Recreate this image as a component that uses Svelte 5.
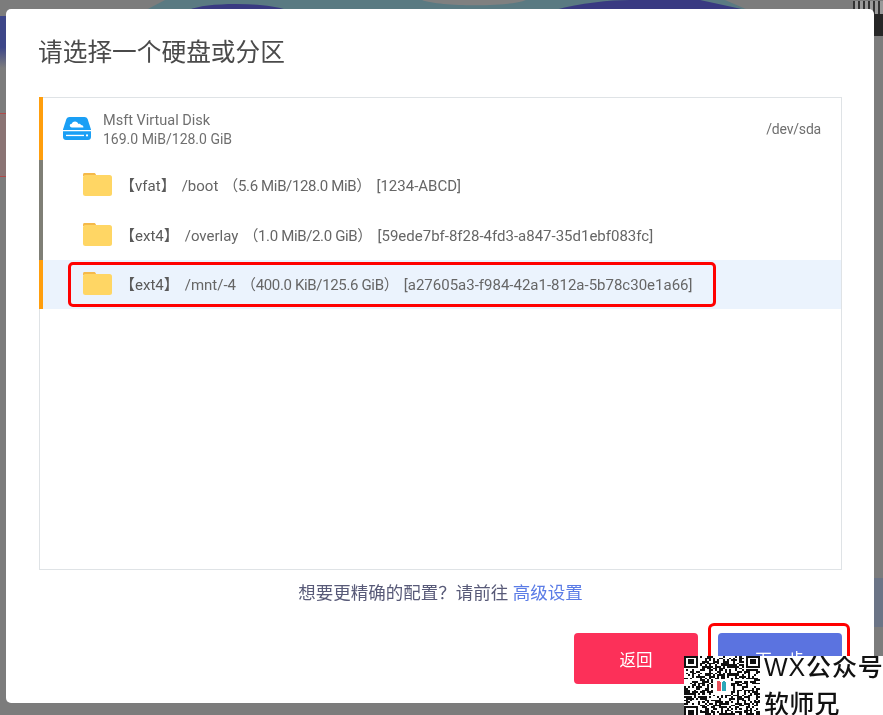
<script lang="ts">
  interface Partition {
    fs: string;
    mount: string;
    usage: string;
    uuid: string;
    selected?: boolean;
  }

  const partitions: Partition[] = [
    { fs: 'vfat', mount: '/boot', usage: '5.6 MiB/128.0 MiB', uuid: '1234-ABCD' },
    { fs: 'ext4', mount: '/overlay', usage: '1.0 MiB/2.0 GiB', uuid: '59ede7bf-8f28-4fd3-a847-35d1ebf083fc' },
    { fs: 'ext4', mount: '/mnt/-4', usage: '400.0 KiB/125.6 GiB', uuid: 'a27605a3-f984-42a1-812a-5b78c30e1a66', selected: true }
  ];

  // rough QR pattern, only has to look like the one in the watermark
  const size = 37;
  function inFinder(x: number, y: number) {
    return (x < 8 && y < 8) || (x > size - 9 && y < 8) || (x < 8 && y > size - 9);
  }
  function inLogo(x: number, y: number) {
    return x > 13 && x < 23 && y > 13 && y < 23;
  }
  const modules: { x: number; y: number }[] = [];
  let seed = 7;
  for (let y = 0; y < size; y++) {
    for (let x = 0; x < size; x++) {
      seed = (seed * 1103515245 + 12345) & 0x7fffffff;
      if (!inFinder(x, y) && !inLogo(x, y) && (seed >> 16) % 100 < 50) modules.push({ x, y });
    }
  }
  const finders = [[0, 0], [size - 7, 0], [0, size - 7]];
</script>

<div class="page">
  <svg class="backdrop" viewBox="0 0 883 10" aria-hidden="true">
    <path d="M146 10 L165 0 H725 L748 10 Z" fill="#5a7a82" />
    <path d="M422 0 C440 7 510 7 526 0 Z" fill="#808080" />
    <path d="M189 10 C205 2 265 2 287 10 Z" fill="#393a82" />
    <path d="M555 10 C580 3 610 0 630 0 H700 L746 10 Z" fill="#393a82" />
  </svg>
  <div class="hazard"></div>
  <div class="hazard-stripes"></div>
  <div class="left-tab"></div>
  <div class="left-mark"></div>
  <div class="right-tint"></div>

  <section class="dialog">
    <h2>请选择一个硬盘或分区</h2>

    <div class="panel">
      <div class="row disk">
        <svg class="disk-icon" viewBox="0 0 28 23" aria-hidden="true">
          <path d="M6.5 0 H21.5 C23 0 24 .8 24.6 2 L28 12.5 V13 H0 V12.5 L3.4 2 C4 .8 5 0 6.5 0 Z" fill="#1a9ff5" />
          <path d="M0 14.2 H28 V20 C28 21.7 26.7 23 25 23 H3 C1.3 23 0 21.7 0 20 Z" fill="#1a9ff5" />
          <path d="M9 10.5 C7.5 10.5 6.8 9.4 6.8 8.5 C6.8 7.4 7.7 6.6 8.8 6.7 C9.3 5.2 10.6 4.4 12 4.4 C13.7 4.4 15 5.5 15.3 7 C16 6.5 17.6 6.7 18 8 C19.7 8 20.6 9 20.4 10.5 Z" fill="#fff" />
          <rect x="3" y="17.8" width="18" height="1.3" fill="#fff" />
          <circle cx="24" cy="18.4" r="1.1" fill="#fff" />
        </svg>
        <div class="disk-name">
          <div class="disk-title">Msft Virtual Disk</div>
          <div>169.0 MiB/128.0 GiB</div>
        </div>
        <div class="dev">/dev/sda</div>
      </div>

      {#each partitions as part}
        <div class="row part" class:selected={part.selected}>
          <svg class="folder" viewBox="0 0 29 23" aria-hidden="true">
            <path d="M1.5 0 H11 C12 0 12.6 .6 13 1.5 V3 H0 V1.5 C0 .6 .6 0 1.5 0 Z" fill="#f5b94a" />
            <rect x="0" y="2" width="29" height="21" rx="2.5" fill="#ffd664" />
          </svg>
          <span class="part-text">
            <span class="fs">【{part.fs}】</span><span class="mount">{part.mount}</span><span class="usage">（{part.usage}）</span><span class="uuid">[{part.uuid}]</span>
          </span>
          {#if part.selected}
            <div class="mark-row"></div>
          {/if}
        </div>
      {/each}
    </div>

    <p class="hint">想要更精确的配置？请前往 <a href="#advanced">高级设置</a></p>

    <div class="actions">
      <button class="back">返回</button>
      <div class="next-wrap">
        <button class="next">下一步</button>
      </div>
    </div>
  </section>

  <div class="watermark">
    <svg class="qr" viewBox="0 0 37 37" preserveAspectRatio="none" shape-rendering="crispEdges" aria-hidden="true">
      {#each modules as m}
        <rect x={m.x} y={m.y} width="1" height="1" fill="#111" />
      {/each}
      {#each finders as f}
        <rect x={f[0] + 0.5} y={f[1] + 0.5} width="6" height="6" fill="none" stroke="#111" />
        <rect x={f[0] + 2} y={f[1] + 2} width="3" height="3" fill="#111" />
      {/each}
      <rect x="16" y="15" width="2" height="6" rx="1" fill="#e8505b" />
      <rect x="18.5" y="15" width="2" height="6" rx="1" fill="#2aa7b8" />
    </svg>
    <div class="wm-text">
      <div class="wm-top">WX公众号</div>
      <div>软师兄</div>
    </div>
  </div>
</div>

<style>
  :global(body) {
    margin: 0;
    background: #7f7f7f;
  }

  .page {
    position: relative;
    box-sizing: border-box;
    width: 883px;
    height: 715px;
    padding: 9px 9px 0 6px;
    background: #7c7c7c;
    overflow: hidden;
    font-family: Roboto, "Noto Sans CJK SC", sans-serif;
    filter: blur(0.4px);
  }

  .backdrop {
    position: absolute;
    left: 0;
    top: 0;
    width: 883px;
    height: 10px;
  }

  .hazard {
    position: absolute;
    right: 0;
    top: 14px;
    width: 9px;
    height: 22px;
    background: #262626;
  }

  .hazard-stripes {
    position: absolute;
    right: 0;
    top: 1px;
    width: 30px;
    height: 13px;
    background: repeating-linear-gradient(90deg, #333 0 2px, #999 2px 5px);
  }

  .left-tab {
    position: absolute;
    left: 0;
    top: 16px;
    width: 6px;
    height: 52px;
    background: linear-gradient(#3d4688 60%, #7c7c7c);
  }

  .left-mark {
    position: absolute;
    left: 0;
    top: 113px;
    width: 6px;
    height: 64px;
    box-sizing: border-box;
    border-top: 1px solid #b04a4a;
    border-bottom: 1px solid #b04a4a;
    background: #8a7474;
  }

  .right-tint {
    position: absolute;
    right: 0;
    top: 578px;
    width: 9px;
    height: 49px;
    background: #6b7486;
  }

  .dialog {
    position: relative;
    box-sizing: border-box;
    height: 694px;
    background: #fff;
    border-radius: 5px;
    padding: 28px 32px 0 33px;
  }

  h2 {
    margin: 0;
    height: 60px;
    font-size: 24.7px;
    line-height: 32px;
    font-weight: 400;
    color: #4a4a4a;
    text-indent: -1px;
  }

  .panel {
    height: 473px;
    box-sizing: border-box;
    border: 1px solid #dfe3e6;
    border-left: none;
    box-shadow: inset 1px 0 0 #dfe3e6;
  }

  .row {
    display: flex;
    align-items: center;
    position: relative;
    box-sizing: border-box;
    border-left: 4px solid #7f7f76;
    color: #666;
    font-size: 15px;
  }

  .disk {
    height: 63px;
    border-left-color: #ff9e0d;
    padding: 0 20px 0 20px;
    margin-top: -1px;
    font-size: 14px;
  }

  .disk-icon {
    width: 28px;
    height: 23px;
    flex: none;
    margin-right: 12px;
  }

  .disk-name {
    flex: 1;
    padding-top: 2px;
    line-height: 19px;
    color: #6f6f6f;
  }

  .disk-title {
    font-size: 14.5px;
  }

  .dev {
    color: #6f6f6f;
    margin-top: 1px;
    letter-spacing: -0.2px;
  }

  .part {
    height: 50px;
    padding-left: 40px;
    padding-bottom: 2px;
  }

  .part.selected {
    height: 49px;
    border-left-color: #ff9e0d;
    background: #ebf3fd;
  }

  .folder {
    width: 29px;
    height: 23px;
    flex: none;
    margin-right: 8px;
  }

  .part-text {
    white-space: nowrap;
    color: #666;
  }

  .fs {
    color: #5a5a5a;
  }

  .mount {
    margin-left: 6px;
    margin-right: 5px;
  }

  .usage {
    margin-right: 5.5px;
    letter-spacing: -0.35px;
  }

  .mark-row {
    position: absolute;
    left: 25px;
    top: 2px;
    width: 648px;
    height: 45px;
    box-sizing: border-box;
    border: 3px solid #f00;
    border-radius: 5px;
  }

  .hint {
    margin: 0;
    padding-top: 13px;
    text-align: center;
    font-size: 17.5px;
    line-height: 20px;
    color: #585a78;
  }

  .hint a {
    color: #5b7ce6;
    text-decoration: none;
  }

  .actions {
    display: flex;
    justify-content: flex-end;
    gap: 20px;
    margin-top: 30px;
  }

  button {
    width: 124px;
    height: 51px;
    border: none;
    border-radius: 4px;
    color: #fff;
    font: inherit;
    font-size: 16.5px;
  }

  .back {
    background: #fc3059;
  }

  .next {
    background: #5b73e0;
  }

  .next-wrap {
    position: relative;
  }

  .next-wrap::before {
    content: "";
    position: absolute;
    left: -10px;
    top: -10px;
    width: 142px;
    height: 80px;
    box-sizing: border-box;
    border: 3px solid #f00;
    border-radius: 6px;
  }

  .watermark {
    position: absolute;
    right: 0;
    bottom: 0;
    width: 199px;
    height: 59px;
    display: flex;
    background: #fff;
    overflow: hidden;
  }

  .qr {
    width: 76px;
    height: 62px;
    flex: none;
  }

  .wm-text {
    display: flex;
    flex-direction: column;
    gap: 15px;
    margin-left: 4px;
    font-size: 25px;
    line-height: 22px;
    font-weight: 500;
    color: #111;
    white-space: nowrap;
    font-family: "Liberation Sans", "Noto Sans CJK SC", sans-serif;
    letter-spacing: 0.3px;
  }

  .wm-top {
    letter-spacing: 0.9px;
  }
</style>
